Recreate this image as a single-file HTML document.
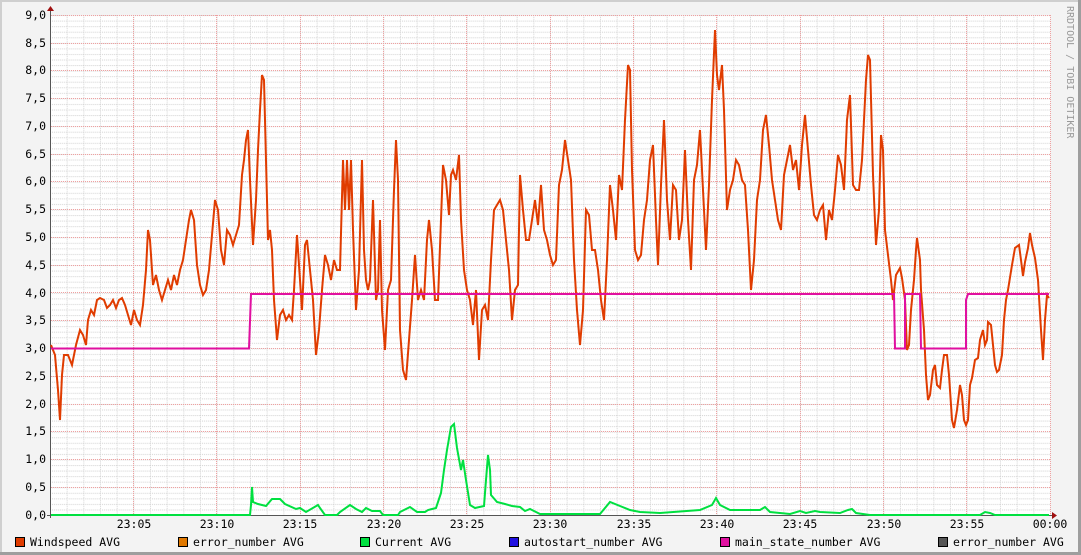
<!DOCTYPE html>
<html><head><meta charset="utf-8"><style>
html,body{margin:0;padding:0;background:#f3f3f3;}
svg{display:block;}
text{font-family:"DejaVu Sans Mono","Liberation Mono",monospace;font-size:11.5px;fill:#000;}
</style></head><body>
<svg width="1081" height="555" viewBox="0 0 1081 555" xmlns="http://www.w3.org/2000/svg">
<defs>
<pattern id="minor" x="50" y="515" width="16.667" height="5.555" patternUnits="userSpaceOnUse">
<line x1="0" y1="0.5" x2="16.667" y2="0.5" stroke="#d4d4d4" stroke-width="1" stroke-dasharray="1,1"/>
<line x1="0.5" y1="0" x2="0.5" y2="5.555" stroke="#d4d4d4" stroke-width="1" stroke-dasharray="1,1"/>
</pattern>
</defs>
<rect x="0" y="0" width="1081" height="555" fill="#f3f3f3"/>
<rect x="0" y="0" width="1081" height="2" fill="#cfcfcf"/>
<rect x="0" y="0" width="2" height="555" fill="#cfcfcf"/>
<rect x="0" y="552" width="1081" height="3" fill="#9e9e9e"/>
<rect x="1078" y="0" width="3" height="555" fill="#9e9e9e"/>
<rect x="51" y="15" width="999" height="500" fill="#ffffff"/>
<rect x="51" y="15" width="999" height="500" fill="url(#minor)"/>
<g stroke="#f0a0a0" stroke-width="1" stroke-dasharray="1,1">
<line x1="51" x2="1050" y1="487.5" y2="487.5"/><line x1="51" x2="1050" y1="459.5" y2="459.5"/><line x1="51" x2="1050" y1="431.5" y2="431.5"/>
<line x1="51" x2="1050" y1="404.5" y2="404.5"/><line x1="51" x2="1050" y1="376.5" y2="376.5"/><line x1="51" x2="1050" y1="348.5" y2="348.5"/>
<line x1="51" x2="1050" y1="320.5" y2="320.5"/><line x1="51" x2="1050" y1="292.5" y2="292.5"/><line x1="51" x2="1050" y1="265.5" y2="265.5"/>
<line x1="51" x2="1050" y1="237.5" y2="237.5"/><line x1="51" x2="1050" y1="209.5" y2="209.5"/><line x1="51" x2="1050" y1="181.5" y2="181.5"/>
<line x1="51" x2="1050" y1="154.5" y2="154.5"/><line x1="51" x2="1050" y1="126.5" y2="126.5"/><line x1="51" x2="1050" y1="98.5" y2="98.5"/>
<line x1="51" x2="1050" y1="70.5" y2="70.5"/><line x1="51" x2="1050" y1="43.5" y2="43.5"/><line x1="51" x2="1050" y1="15.5" y2="15.5"/>
<line y1="15" y2="515" x1="133.5" x2="133.5"/><line y1="15" y2="515" x1="216.5" x2="216.5"/><line y1="15" y2="515" x1="300.5" x2="300.5"/>
<line y1="15" y2="515" x1="383.5" x2="383.5"/><line y1="15" y2="515" x1="466.5" x2="466.5"/><line y1="15" y2="515" x1="550.5" x2="550.5"/>
<line y1="15" y2="515" x1="633.5" x2="633.5"/><line y1="15" y2="515" x1="716.5" x2="716.5"/><line y1="15" y2="515" x1="800.5" x2="800.5"/>
<line y1="15" y2="515" x1="883.5" x2="883.5"/><line y1="15" y2="515" x1="966.5" x2="966.5"/><line y1="15" y2="515" x1="1050.5" x2="1050.5"/>
</g>
<line x1="50.5" y1="10" x2="50.5" y2="518" stroke="#555" stroke-width="1"/>
<line x1="47" y1="515.5" x2="1054" y2="515.5" stroke="#555" stroke-width="1"/>
<polygon points="47,11 54,11 50.5,6" fill="#a01010"/>
<polygon points="1052,512 1052,519 1057,515.5" fill="#a01010"/>
<g text-anchor="end">
<text x="46" y="19">9,0</text><text x="46" y="47">8,5</text><text x="46" y="74">8,0</text><text x="46" y="102">7,5</text>
<text x="46" y="130">7,0</text><text x="46" y="158">6,5</text><text x="46" y="185">6,0</text><text x="46" y="213">5,5</text>
<text x="46" y="241">5,0</text><text x="46" y="269">4,5</text><text x="46" y="297">4,0</text><text x="46" y="324">3,5</text>
<text x="46" y="352">3,0</text><text x="46" y="380">2,5</text><text x="46" y="408">2,0</text><text x="46" y="435">1,5</text>
<text x="46" y="463">1,0</text><text x="46" y="491">0,5</text><text x="46" y="519">0,0</text>
</g>
<g text-anchor="middle">
<text x="134" y="528">23:05</text><text x="217" y="528">23:10</text><text x="300" y="528">23:15</text><text x="384" y="528">23:20</text>
<text x="467" y="528">23:25</text><text x="550" y="528">23:30</text><text x="634" y="528">23:35</text><text x="717" y="528">23:40</text>
<text x="800" y="528">23:45</text><text x="884" y="528">23:50</text><text x="967" y="528">23:55</text><text x="1050" y="528">00:00</text>
</g>
<polyline fill="none" stroke="#00e040" stroke-width="2" points="51,515 250,515 251,505 252,487 253,502 258,504 266,506 272,499 280,499 285,504 296,509 300,508 306,512 318,505 320,508 325,515 337,515 340,512 350,505 356,509 362,512 366,508 372,511 380,511 383,515 398,515 400,512 410,507 417,512 425,512 428,510 436,508 441,493 444,470 447,450 451,427 454,424 457,448 461,470 463,460 466,480 470,505 475,508 484,506 486,480 488,455 490,470 491,495 497,502 505,504 512,506 520,507 525,511 530,509 540,514 600,514 610,502 620,506 630,510 640,512 660,513 700,510 712,505 716,498 720,505 730,510 760,510 765,507 770,512 790,514 800,511 806,513 815,511 820,512 840,513 848,510 852,509 856,513 870,515 980,515 985,512 990,513 995,515 1049,515"/>
<polyline fill="none" stroke="#e03c00" stroke-width="2" points="51,345 55,355 58,390 60,420 62,375 64,355 68,355 72,365 76,345 80,330 83,335 86,345 88,320 91,310 94,315 97,300 100,298 104,300 107,308 110,305 113,300 116,308 119,300 122,298 125,305 128,315 131,325 134,310 137,320 140,325 143,305 146,270 148,230 150,240 153,285 156,275 159,290 162,300 165,290 168,280 171,290 174,275 177,285 180,270 183,260 186,240 189,220 191,210 194,220 197,265 200,285 203,295 206,290 209,270 212,235 215,200 218,210 221,250 224,265 227,230 230,235 233,245 236,235 239,225 242,175 244,160 246,140 248,130 250,180 253,245 256,200 258,150 260,110 262,75 264,80 266,160 268,240 270,230 272,250 274,300 277,340 280,315 283,310 286,320 289,315 292,320 294,290 297,235 300,280 302,310 305,245 307,240 310,270 313,300 316,355 319,330 322,290 325,255 328,265 331,280 334,260 337,270 340,270 343,160 345,210 347,160 349,210 351,160 353,230 356,310 359,270 362,160 364,250 366,280 368,290 370,280 373,200 376,300 378,290 380,220 382,310 385,350 388,290 391,280 394,190 396,140 398,180 400,330 403,370 406,380 409,340 412,300 415,255 418,300 421,290 424,300 427,240 429,220 432,250 435,300 438,300 441,220 443,165 446,180 449,215 451,175 453,170 456,180 459,155 461,220 464,270 467,290 470,300 473,325 476,290 479,360 482,310 485,305 488,320 491,260 494,210 497,205 500,200 503,210 506,240 509,270 512,320 515,290 518,285 520,175 523,210 526,240 529,240 532,220 535,200 538,225 541,185 544,230 547,240 550,255 553,265 556,260 559,185 562,170 565,140 568,160 571,180 574,260 577,310 580,345 583,310 586,210 589,215 592,250 595,250 598,270 601,300 604,320 607,260 610,185 613,210 616,240 619,175 622,190 625,120 628,65 630,70 632,170 635,250 638,260 641,255 644,220 647,200 650,160 653,145 656,220 658,265 661,185 664,120 667,200 670,240 673,185 676,190 679,240 682,220 685,150 688,220 691,270 694,180 697,165 700,130 703,190 706,250 709,185 712,100 715,30 717,75 719,90 722,65 724,110 727,210 730,190 733,180 736,160 739,165 742,180 745,185 748,230 751,290 754,260 757,200 760,180 763,130 766,115 769,145 772,180 775,200 778,220 781,230 784,175 787,160 790,145 793,170 796,160 799,190 802,145 805,115 808,150 811,185 814,215 817,220 820,210 823,205 826,240 829,210 832,220 835,190 838,155 841,165 844,190 847,120 850,95 853,185 856,190 859,190 862,160 864,120 866,80 868,55 870,60 873,175 876,245 879,210 881,135 883,150 885,230 891,280 893,300 896,275 900,268 902,278 905,300 907,350 909,345 911,310 914,280 916,250 917,238 920,260 921,290 924,330 926,375 928,400 930,395 933,370 935,365 937,385 940,388 942,370 944,355 947,355 949,375 952,420 954,428 957,410 960,385 962,395 964,420 966,425 968,420 970,385 972,378 975,360 978,358 980,340 983,330 985,345 987,340 988,322 991,325 993,345 995,365 997,372 999,370 1002,355 1004,320 1006,300 1008,290 1012,265 1015,248 1019,245 1021,260 1023,276 1025,262 1028,248 1030,233 1032,245 1035,258 1038,280 1041,330 1043,360 1045,320 1047,295 1049,298"/>
<polyline fill="none" stroke="#e010a0" stroke-width="2" points="51,348.5 249,348.5 251,294 894,294 895,348.5 905,348.5 905,294 920,294 921,348.5 966,348.5 966,300 968,294 1049,294"/>
<text x="1067" y="6" transform="rotate(90 1067 6)" style="font-size:10px;fill:#999999">RRDTOOL / TOBI OETIKER</text>
<g stroke="#000" stroke-width="1">
<rect x="15.5" y="537.5" width="9" height="9" fill="#e03c00"/>
<rect x="178.5" y="537.5" width="9" height="9" fill="#e07800"/>
<rect x="360.5" y="537.5" width="9" height="9" fill="#00e040"/>
<rect x="509.5" y="537.5" width="9" height="9" fill="#2010e0"/>
<rect x="720.5" y="537.5" width="9" height="9" fill="#e010a0"/>
<rect x="938.5" y="537.5" width="9" height="9" fill="#555555"/>
</g>
<text x="30" y="546">Windspeed AVG</text>
<text x="193" y="546">error_number AVG</text>
<text x="375" y="546">Current AVG</text>
<text x="524" y="546">autostart_number AVG</text>
<text x="735" y="546">main_state_number AVG</text>
<text x="953" y="546">error_number AVG</text>
</svg>
</body></html>
